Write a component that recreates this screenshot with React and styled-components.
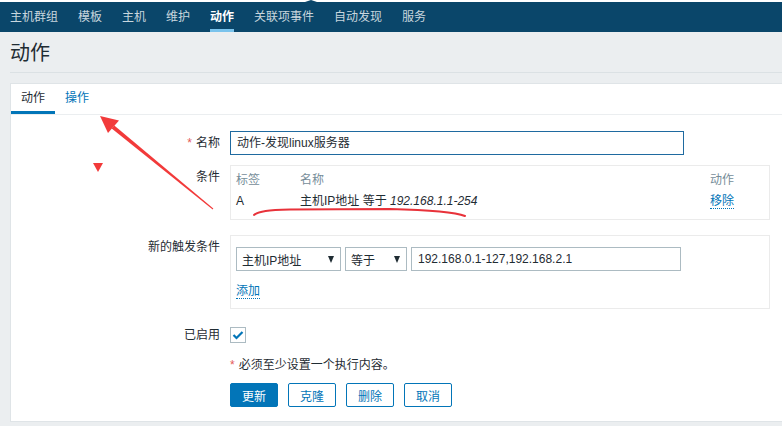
import styled, { createGlobalStyle } from 'styled-components';

const GlobalStyle = createGlobalStyle`
    html, body {
        margin: 0;
        padding: 0;
        background: #ebeef0;
        overflow: hidden;
    }
    body {
        font-family: "Liberation Sans", Arial, "Noto Sans CJK SC", sans-serif;
        font-size: 12px;
        color: #1f2c33;
    }
`

const Page = styled.div`
    position: relative;
    width: 782px;
    height: 426px;
    overflow: hidden;
`

const Header = styled.div`
    position: relative;
    border-top: 2px solid #ffffff;
    background: #0a466a;

    &::before {
        content: '';
        position: absolute;
        left: 305px;
        top: -2px;
        border-left: 6px solid transparent;
        border-right: 6px solid transparent;
        border-bottom: 2px solid #0a466a;
    }
`

const Nav = styled.nav`
    display: flex;
    gap: 20px;
    height: 30px;
    padding: 0 10px;
`

const NavItem = styled.span`
    display: flex;
    align-items: center;
    height: 27px;
    border-bottom: 3px solid ${props => props.$active ? '#7ac3ec' : 'transparent'};
    color: ${props => props.$active ? '#ffffff' : '#c8d6de'};
    font-weight: ${props => props.$active ? 700 : 400};
    white-space: nowrap;
`

const Main = styled.div`
    padding-left: 10px;
`

const PageTitle = styled.h1`
    margin: 0;
    height: 40px;
    line-height: 42px;
    font-size: 20px;
    font-weight: 400;
    color: #1f2c33;
    border-bottom: 1px solid #dbe1e4;
`

const Panel = styled.div`
    margin-top: 10px;
    margin-right: -20px;
    background: #ffffff;
    border: 1px solid #dfe4e7;
    padding-bottom: 14px;
`

const TabBar = styled.div`
    display: flex;
    border-bottom: 1px solid #ebeef0;
`

const Tab = styled.span`
    display: block;
    width: 44px;
    text-align: center;
    height: 25px;
    padding-top: 2px;
    line-height: 25px;
    border-bottom: 3px solid ${props => props.$active ? '#0275b8' : 'transparent'};
    color: ${props => props.$active ? '#1f2c33' : '#0275b8'};
`

const Form = styled.div`
    display: grid;
    grid-template-columns: 209px 540px;
    column-gap: 10px;
    padding-top: 16px;
`

const Label = styled.div`
    text-align: right;
    line-height: ${props => props.$lh || 24}px;
    margin-top: ${props => props.$mt || 0}px;
    white-space: nowrap;
`

const Field = styled.div`
    margin-top: ${props => props.$mt || 0}px;
`

const Star = styled.span`
    color: #e45959;
    margin-right: 4px;
`

const TextInput = styled.div`
    box-sizing: border-box;
    width: ${props => props.$w}px;
    height: 24px;
    line-height: 22px;
    padding: 0 6px;
    border: 1px solid ${props => props.$focus ? '#1f6aa0' : '#acbbc2'};
    background: #ffffff;
    white-space: nowrap;
    overflow: hidden;
`

const Box = styled.div`
    box-sizing: border-box;
    width: 540px;
    border: 1px solid #ebebeb;
    padding: ${props => props.$pad};
`

const Table = styled.table`
    width: 100%;
    border-collapse: collapse;

    th {
        font-weight: 400;
        color: #768d99;
        text-align: left;
        line-height: 20px;
        padding: 0;
    }
    td {
        line-height: 22px;
        padding: 0;
    }
`

const Italic = styled.i`
    font-style: italic;
`

const Link = styled.span`
    color: #0275b8;
    border-bottom: 1px dotted #0275b8;
`

const Controls = styled.div`
    display: flex;
    gap: 4px;
`

const Select = styled.div`
    box-sizing: border-box;
    display: flex;
    align-items: center;
    justify-content: space-between;
    width: ${props => props.$w}px;
    height: 24px;
    padding: 0 6px 0 5px;
    border: 1px solid #acbbc2;
    background: #ffffff;
    white-space: nowrap;
`

const Caret = styled.span`
    width: 0;
    height: 0;
    border-left: 3.5px solid transparent;
    border-right: 3.5px solid transparent;
    border-top: 7px solid #1f2c33;
`

const AddRow = styled.div`
    margin-top: 13px;
    line-height: 14px;
`

const Check = styled.div`
    box-sizing: border-box;
    width: 16px;
    height: 16px;
    border: 1px solid #acbbc2;
    display: flex;
    align-items: center;
    justify-content: center;
`

const Note = styled.div`
    line-height: 14px;
`

const Buttons = styled.div`
    display: flex;
    gap: 10px;
`

const Button = styled.button`
    box-sizing: border-box;
    width: 48px;
    height: 24px;
    padding: 0;
    border-radius: 2px;
    border: 1px solid #0275b8;
    background: ${props => props.$primary ? '#0275b8' : '#ffffff'};
    color: ${props => props.$primary ? '#ffffff' : '#0275b8'};
    font-family: inherit;
    font-size: 12px;
`

const Overlay = styled.svg`
    position: absolute;
    left: 0;
    top: 0;
    pointer-events: none;
`

const navItems = ['主机群组', '模板', '主机', '维护', '动作', '关联项事件', '自动发现', '服务'];

export default function App() {
    return (
        <Page>
            <GlobalStyle />
            <Header>
                <Nav>
                    {navItems.map(item => (
                        <NavItem key={item} $active={item === '动作'}>{item}</NavItem>
                    ))}
                </Nav>
            </Header>
            <Main>
                <PageTitle>动作</PageTitle>
                <Panel>
                    <TabBar>
                        <Tab $active>动作</Tab>
                        <Tab>操作</Tab>
                    </TabBar>
                    <Form>
                        <Label><Star>*</Star>名称</Label>
                        <Field>
                            <TextInput $w={454} $focus>动作-发现linux服务器</TextInput>
                        </Field>

                        <Label $mt={10}>条件</Label>
                        <Field $mt={10}>
                            <Box $pad="4px 5px 7px">
                                <Table>
                                    <colgroup>
                                        <col style={{ width: 64 }} />
                                        <col />
                                        <col style={{ width: 54 }} />
                                    </colgroup>
                                    <thead>
                                        <tr><th>标签</th><th>名称</th><th>动作</th></tr>
                                    </thead>
                                    <tbody>
                                        <tr>
                                            <td>A</td>
                                            <td>主机IP地址 等于 <Italic>192.168.1.1-254</Italic></td>
                                            <td><Link>移除</Link></td>
                                        </tr>
                                    </tbody>
                                </Table>
                            </Box>
                        </Field>

                        <Label $mt={15}>新的触发条件</Label>
                        <Field $mt={15}>
                            <Box $pad="11px 5px 10px">
                                <Controls>
                                    <Select $w={105}>主机IP地址<Caret /></Select>
                                    <Select $w={62}>等于<Caret /></Select>
                                    <TextInput $w={270}>192.168.0.1-127,192.168.2.1</TextInput>
                                </Controls>
                                <AddRow><Link>添加</Link></AddRow>
                            </Box>
                        </Field>

                        <Label $mt={18} $lh={16}>已启用</Label>
                        <Field $mt={18}>
                            <Check>
                                <svg width="12" height="10" viewBox="0 0 12 10">
                                    <path d="M1.5 5 L4.5 8 L10.5 2" fill="none" stroke="#0275b8" strokeWidth="2.2" />
                                </svg>
                            </Check>
                        </Field>

                        <div />
                        <Field $mt={15}>
                            <Note><Star>*</Star>必须至少设置一个执行内容。</Note>
                        </Field>

                        <div />
                        <Field $mt={11}>
                            <Buttons>
                                <Button $primary>更新</Button>
                                <Button>克隆</Button>
                                <Button>删除</Button>
                                <Button>取消</Button>
                            </Buttons>
                        </Field>
                    </Form>
                </Panel>
            </Main>
            <Overlay width="782" height="426" viewBox="0 0 782 426">
                <polygon points="111.7,128.5 114.3,125.5 213.3,208.6 212.7,209.4" fill="#f23a3a" />
                <polygon points="100,116 119,120.5 108,133" fill="#f23a3a" />
                <polygon points="93,163 103,163 98,172" fill="#f23a3a" />
                <path d="M254 215 C 259 211, 268 210, 290 209.5 L 390 209 C 430 210, 455 212, 465 216" fill="none" stroke="#e8323a" strokeWidth="2" strokeLinecap="round" />
            </Overlay>
        </Page>
    );
}
